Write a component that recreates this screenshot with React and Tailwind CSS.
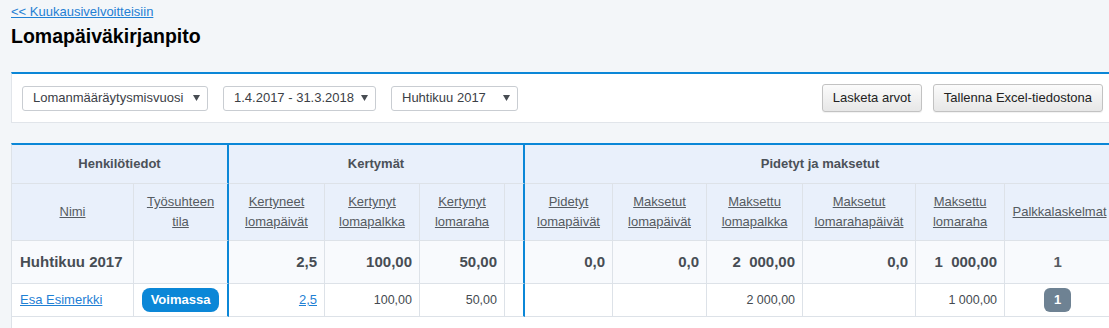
const BLUE = "#0b87d7";

function Caret() {
  return (
    <svg width="7" height="6" viewBox="0 0 7 6" className="shrink-0">
      <path d="M0 0h7L3.5 6z" fill="#474c52" />
    </svg>
  );
}

function Select({ label, className }) {
  return (
    <div
      className={`flex h-[25px] items-center justify-between rounded-[3px] border border-[#c9cdd2] bg-white pl-[10px] pr-[7px] text-[13px] text-[#3b4046] ${className}`}
    >
      <span>{label}</span>
      <Caret />
    </div>
  );
}

function Button({ children }) {
  return (
    <button className="h-[28px] rounded-[3px] border border-[#c2c2c2] bg-linear-to-b from-[#fbfbfb] to-[#e7e7e7] px-[10px] text-[13px] text-[#222] shadow-[0_1px_1px_rgba(0,0,0,0.06)]">
      {children}
    </button>
  );
}

// right border of each column: gray, or blue between groups
const rb = [
  "border-r border-r-[#dde2e8]",
  "border-r-2 border-r-[#0b87d7]",
  "border-r border-r-[#dde2e8]",
  "border-r border-r-[#dde2e8]",
  "border-r border-r-[#dde2e8]",
  "border-r-2 border-r-[#0b87d7]",
  "border-r border-r-[#dde2e8]",
  "border-r border-r-[#dde2e8]",
  "border-r border-r-[#dde2e8]",
  "border-r border-r-[#dde2e8]",
  "border-r border-r-[#dde2e8]",
  "border-r border-r-[#dde2e8]",
];

const headers = [
  ["Nimi"],
  ["Työsuhteen", "tila"],
  ["Kertyneet", "lomapäivät"],
  ["Kertynyt", "lomapalkka"],
  ["Kertynyt", "lomaraha"],
  [],
  ["Pidetyt", "lomapäivät"],
  ["Maksetut", "lomapäivät"],
  ["Maksettu", "lomapalkka"],
  ["Maksetut", "lomarahapäivät"],
  ["Maksettu", "lomaraha"],
  ["Palkkalaskelmat"],
];

const summary = ["", "", "2,5", "100,00", "50,00", "", "0,0", "0,0", "2\u00a0\u00a0000,00", "0,0", "1\u00a0\u00a0000,00"];
const data = ["", "", "", "100,00", "50,00", "", "", "", "2\u00a0000,00", "", "1\u00a0000,00"];

export default function App() {
  return (
    <div className="h-[328px] w-[1109px] overflow-hidden bg-[#f3f6f9] font-['Liberation_Sans',Arial,sans-serif]">
      <div className="ml-[11px] w-[1104px]">
        <a href="#" className="block w-fit pt-[4px] text-[13px] leading-4 text-[#1f80d4] underline">
          &lt;&lt; Kuukausivelvoitteisiin
        </a>
        <h1 className="mt-[4px] text-[19.5px] font-bold leading-6 text-black">Lomapäiväkirjanpito</h1>

        {/* Toolbar */}
        <div className="mt-[24px] flex items-center border-t-2 border-b border-l border-t-[#0b87d7] border-b-[#e1e5ea] border-l-[#e1e5ea] bg-white py-[10px] pl-[10px] pr-[12px]">
          <div className="flex gap-[15px]">
            <Select label="Lomanmääräytysmisvuosi" className="w-[186px]" />
            <Select label="1.4.2017 - 31.3.2018" className="w-[153px]" />
            <Select label="Huhtikuu 2017" className="w-[127px]" />
          </div>
          <div className="ml-auto flex gap-[11px]">
            <Button>Lasketa arvot</Button>
            <Button>Tallenna Excel-tiedostona</Button>
          </div>
        </div>

        {/* Table */}
        <div className="mt-[20px] border-t-2 border-l border-t-[#0b87d7] border-l-[#dde2e8] bg-white pb-10">
          <table className="w-[1103px] table-fixed border-separate border-spacing-0">
            <colgroup>
              <col className="w-[122px]" />
              <col className="w-[95px]" />
              <col className="w-[96px]" />
              <col className="w-[95px]" />
              <col className="w-[85px]" />
              <col className="w-[20px]" />
              <col className="w-[88px]" />
              <col className="w-[94px]" />
              <col className="w-[96px]" />
              <col className="w-[113px]" />
              <col className="w-[89px]" />
              <col className="w-[110px]" />
            </colgroup>
            <thead>
              <tr className="h-[39px] bg-[#e9f0fb] text-[13px] font-bold text-[#4b5158]">
                <th colSpan={2} className="border-r-2 border-b border-r-[#0b87d7] border-b-[#dde2e8]">
                  Henkilötiedot
                </th>
                <th colSpan={4} className="border-r-2 border-b border-r-[#0b87d7] border-b-[#dde2e8]">
                  Kertymät
                </th>
                <th colSpan={6} className="border-b border-b-[#dde2e8]">
                  Pidetyt ja maksetut
                </th>
              </tr>
              <tr className="h-[57px] bg-[#e9f0fb] text-[13px] font-normal leading-[20px] text-[#555b61]">
                {headers.map((h, i) => (
                  <th key={i} className={`border-b border-b-[#dde2e8] font-normal ${rb[i]}`}>
                    {h.map((line) => (
                      <span key={line} className="block underline">
                        {line}
                      </span>
                    ))}
                  </th>
                ))}
              </tr>
            </thead>
            <tbody>
              <tr className="h-[43px] bg-[#f8fafd] text-[15px] font-bold text-[#474d54]">
                {summary.map((v, i) => (
                  <td
                    key={i}
                    className={`border-b border-b-[#dde2e8] ${rb[i]} ${i === 0 ? "pl-2 text-left" : "pr-[7px] text-right"}`}
                  >
                    {i === 0 ? "Huhtikuu 2017" : v}
                  </td>
                ))}
                <td className="border-b border-b-[#dde2e8] pr-[5px] text-center text-[#555b61]">1</td>
              </tr>
              <tr className="h-[33px] bg-white text-[12.5px] text-[#444a50]">
                <td className={`border-b border-b-[#dde2e8] pl-2 ${rb[0]}`}>
                  <a href="#" className="text-[13px] text-[#1f80d4] underline">
                    Esa Esimerkki
                  </a>
                </td>
                <td className={`border-b border-b-[#dde2e8] text-center ${rb[1]}`}>
                  <span className="inline-flex h-[24px] items-center rounded-[8px] bg-[#0b87d7] px-[9px] text-[13px] font-bold text-white">
                    Voimassa
                  </span>
                </td>
                <td className={`border-b border-b-[#dde2e8] pr-[7px] text-right ${rb[2]}`}>
                  <a href="#" className="text-[13px] text-[#1f80d4] underline">
                    2,5
                  </a>
                </td>
                {data.slice(3).map((v, j) => (
                  <td key={j} className={`border-b border-b-[#dde2e8] pr-[7px] text-right ${rb[j + 3]}`}>
                    {v}
                  </td>
                ))}
                <td className="border-b border-b-[#dde2e8] pr-[5px] text-center">
                  <span className="inline-flex h-[24px] w-[27px] items-center justify-center rounded-[6px] bg-[#6e8293] text-[13px] font-bold text-white">
                    1
                  </span>
                </td>
              </tr>
            </tbody>
          </table>
        </div>
      </div>
    </div>
  );
}
